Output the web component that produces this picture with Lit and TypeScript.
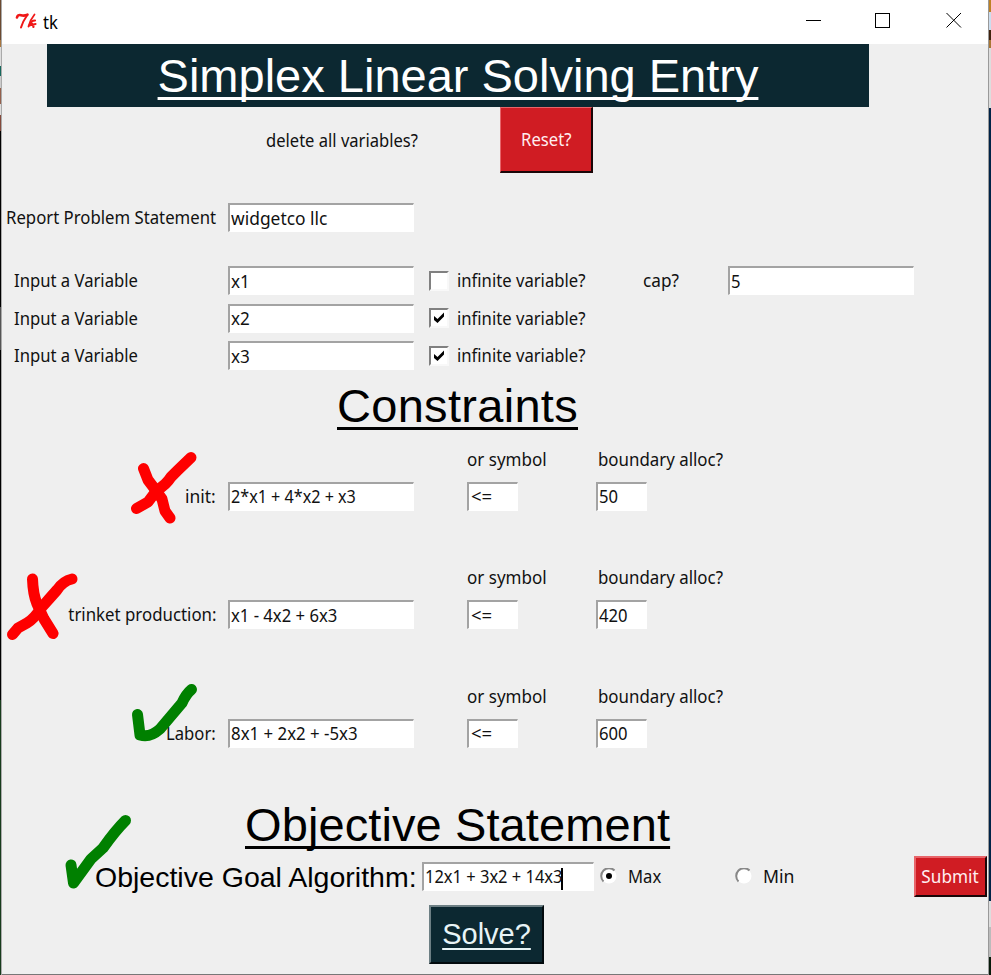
import { LitElement, html, css, svg, nothing } from "lit";
import { customElement } from "lit/decorators.js";
import { styleMap } from "lit/directives/style-map.js";

interface Variable {
  name: string;
  infinite: boolean;
  cap?: string;
}

interface Constraint {
  label: string;
  labelStretch?: number;
  expr: string;
  exprStretch?: number;
  symbol: string;
  bound: string;
  passed: boolean;
  strokes: string[];
}

const VARIABLES: Variable[] = [
  { name: "x1", infinite: false, cap: "5" },
  { name: "x2", infinite: true },
  { name: "x3", infinite: true },
];

const CONSTRAINTS: Constraint[] = [
  {
    label: "init:", labelStretch: 0.97, expr: "2*x1 + 4*x2 + x3", exprStretch: 0.897,
    symbol: "<=", bound: "50", passed: false,
    strokes: [
      "M191 457.500L178 470L171 477Q166 485 157 490L148 502L136.500 508.500",
      "M143.500 468.500L148 480Q155 489 162 499L165 511L170 518",
    ],
  },
  {
    label: "trinket production:", labelStretch: 0.935, expr: "x1 - 4x2 + 6x3",
    symbol: "<=", bound: "420", passed: false,
    strokes: [
      "M72 579Q63 581 57 590Q49 599 42 607Q34 619 27 623L18 628L12.500 634.500",
      "M32.500 579Q33 594 37 604L44 619L53 633.500",
    ],
  },
  {
    label: "Labor:", expr: "8x1 + 2x2 + -5x3", exprStretch: 0.935,
    symbol: "<=", bound: "600", passed: true,
    strokes: ["M137.500 714.500L140 735Q150 738 160 729L182 703Q186 694 191.500 689.500"],
  },
];

@customElement("app-root")
export class AppRoot extends LitElement {
  static styles = css`
    :host {
      display: grid;
      grid-template-columns: 2px 986px 3px;
      width: 991px;
      height: 975px;
      overflow: hidden;
      position: relative;
      font: 18px/24px "Noto Sans", "Open Sans", sans-serif;
      color: #111;
      background: #efefef;
    }
    .edge-l {
      border-right: 1px solid #aaa;
      background: linear-gradient(#6b4a30 0 40px, #a8763f 40px 47px, #ddd 47px 66px, #16685c 66px 76px, #ccc 76px 88px, #94604c 88px 104px, #ddd 104px 115px, #844a3c 115px 131px, #000 131px 307px, #555 307px 350px, #000 350px 700px, #173b1c 700px);
    }
    .edge-r {
      border-left: 1px solid #999;
      background: linear-gradient(#bd8125 0 12px, #cde 12px 30px, #40230e 30px 40px, #a87635 40px 48px, #ddd 48px 108px, #002347 108px 901px, #ddd 901px 927px, #bbb 927px 957px, #071a0a 957px);
    }
    .window { display: flex; flex-direction: column; border-bottom: 1px solid #777; }
    .titlebar {
      height: 44px;
      flex: none;
      background: #fff;
      display: flex;
      align-items: center;
      padding: 0 2px 0 13px;
      box-sizing: border-box;
    }
    .title { margin-left: 6px; font-size: 17.500px; color: #000; }
    .controls { margin-left: auto; display: flex; }
    svg { display: block; }
    .s { display: inline-block; transform: scaleX(0.925); transform-origin: 0 50%; white-space: pre; }
    .r .s { transform-origin: 100% 50%; }
    .c .s { transform-origin: 50% 50%; }
    .banner {
      width: 822px;
      height: 63px;
      margin-left: 45px;
      background: #0c2831;
      color: #fff;
      display: flex;
      justify-content: center;
    }
    .big {
      font: 47px/63px "Liberation Sans", Arial, sans-serif;
      text-decoration: underline;
      text-decoration-thickness: 3px;
      text-underline-offset: 5px;
      text-decoration-skip-ink: none;
      white-space: nowrap;
    }
    .heading .big { color: #000; letter-spacing: 0.1px; }
    .heading.h-con .big { letter-spacing: 0.300px; }
    .resetrow { display: flex; height: 66px; align-items: center; padding-left: 264px; }
    .resetrow .lbl { width: 234px; }
    .btn {
      box-sizing: border-box;
      background: #d01c23;
      color: #ffeef0;
      border: 2px solid;
      border-color: #e8656a #1a0608 #1a0608 #e8656a;
      display: flex;
      align-items: center;
      justify-content: center;
      padding: 0 0 1px;
      font: inherit;
    }
    .reset { width: 93px; height: 66px; border-top-width: 1px; border-left-width: 1px; }
    .row {
      display: grid;
      grid-template-columns: 214px 12px 201px 202px 97px 186px;
      align-items: center;
      height: 29px;
    }
    .row .s { position: relative; top: -0.500px; }
    .r { text-align: right; }
    .field {
      box-sizing: border-box;
      width: 186px;
      height: 29px;
      background: #fff;
      border: solid #fff;
      border-top-color: #a3a3a3;
      border-left-color: #a3a3a3;
      border-width: 2px 1px 1px 2px;
      padding-left: 1px;
      line-height: 26px;
      white-space: nowrap;
    }
    .report { margin-top: 30px; }
    .vars { display: grid; gap: 8.500px; margin-top: 34px; }
    .report .name { padding-left: 4px; }
    .vars .name { padding-left: 12px; }
    .cap { padding-left: 12px; }
    .check { display: flex; align-items: center; }
    .box {
      width: 16px;
      height: 16px;
      background: #fff;
      border: 2px solid;
      border-color: #808080 #f8f8f8 #f8f8f8 #808080;
      margin-right: 8px;
    }
    .heading { display: flex; height: 63px; }
    .h-con { margin: 4px 0 0 335px; height: 73px; }
    .con { height: 118.500px; }
    .con .row { grid-template-columns: 214px 12px 239px 129px 1fr; }
    .con .hints { height: 24px; }
    .con .main { margin-top: 10.500px; }
    .small { width: 51px; }
    .sym { padding-left: 2px; }
    .hint-b { padding-left: 2px; }
    .h-obj { margin: -10px 0 0 243px; }
    .goal {
      display: grid;
      grid-template-columns: 93px 327px 178px 135px 179px 73px;
      height: 42px;
      align-items: center;
    }
    .goal-label { font: 28.500px/36px "Liberation Sans", Arial, sans-serif; white-space: nowrap; color: #000; }
    .goal .field { width: 172px; }
    .caret { display: inline-block; width: 2px; height: 22px; background: #000; vertical-align: middle; margin-left: -14px; }
    .radio { display: flex; align-items: center; gap: 10px; }
    .radio .s, .goal .field .s { position: relative; top: -1px; }
    .submit { width: 73px; height: 41px; align-self: start; }
    .solve {
      margin: 7px 0 0 427px;
      width: 115px;
      height: 59px;
      background: #0c2831;
      border-color: #6d7f84 #020a0d #020a0d #6d7f84;
      font: 29px/40px "Liberation Sans", Arial, sans-serif;
      text-decoration: underline;
      text-decoration-thickness: 2px;
      text-underline-offset: 4px;
      color: #e8f4f6;
    }
    .marks { position: absolute; inset: 0; pointer-events: none; }
    .marks path { fill: none; stroke-width: 11; stroke-linecap: round; stroke-linejoin: round; }
    .bad { stroke: #fe0000; }
    .good { stroke: #008000; }
  `;

  // Narrows or widens a run of interface text horizontally.
  private text(value: string, stretch = 0.925) {
    return html`<span class="s" style=${styleMap({ transform: `scaleX(${stretch})` })}>${value}</span>`;
  }

  private variable(v: Variable) {
    return html`<div class="row">
      <div class="name">${this.text("Input a Variable")}</div><div></div>
      <div class="field">${this.text(v.name, 0.95)}</div>
      <div class="check">
        <div class="box">
          ${v.infinite
            ? html`<svg width="16" height="16"><path d="M3 6V10L6.500 13L13 6.500V2.500L6.500 9Z" fill="#000" /></svg>`
            : nothing}
        </div>
        ${this.text("infinite variable?")}
      </div>
      ${v.cap === undefined
        ? nothing
        : html`<div class="cap">${this.text("cap?", 0.955)}</div><div class="field">${this.text(v.cap)}</div>`}
    </div>`;
  }

  private constraint(c: Constraint) {
    return html`<div class="con">
      <div class="row hints">
        <div></div><div></div><div></div>
        <div>${this.text("or symbol", 0.945)}</div>
        <div class="hint-b">${this.text("boundary alloc?", 0.937)}</div>
      </div>
      <div class="row main">
        <div class="r">${this.text(c.label, c.labelStretch)}</div><div></div>
        <div class="field">${this.text(c.expr, c.exprStretch)}</div>
        <div class="field small sym">${this.text(c.symbol, 1.03)}</div>
        <div class="field small">${this.text(c.bound)}</div>
      </div>
    </div>`;
  }

  private radio(label: string, on: boolean, stretch: number) {
    return html`<div class="radio">
      <svg width="18" height="18" viewBox="0 0 18 18">
        <circle cx="9" cy="8" r="7.500" fill="#fff" />
        <path d="M3.500 13.500A7.500 7.500 0 0 1 14.500 2.500" fill="none" stroke="#888" stroke-width="2" />
        ${on ? svg`<circle cx="9" cy="8" r="3" fill="#000" />` : nothing}
      </svg>
      ${this.text(label, stretch)}
    </div>`;
  }

  render() {
    return html`
      <div class="edge-l"></div>
      <div class="window">
        <div class="titlebar">
          <svg width="22" height="18" viewBox="0 0 22 18" fill="none" stroke="#f01818" stroke-linecap="round">
            <path d="M2 4.500Q2.500 1.500 6 2.200Q9 3.200 12.500 1.700" stroke-width="2.600" />
            <path d="M12 2.500Q8 8 6 14.500" stroke-width="2" />
            <path d="M19.500 1.500Q15 7 13.500 13.500" stroke-width="1.800" />
            <path d="M20 7.500Q16 7.500 15.500 10.500Q18 10 18.500 14M14 12.500L20.500 11" stroke-width="2.200" />
          </svg>
          <span class="title">${this.text("tk", 0.95)}</span>
          <svg class="controls" width="180" height="44" fill="none" stroke="#000">
            <path d="M0 20.500H15" />
            <rect x="69.500" y="13.500" width="14" height="14" />
            <path d="M140.500 13L155 27.500M155 13L140.500 27.500" />
          </svg>
        </div>
        <div class="banner"><span class="big">Simplex Linear Solving Entry</span></div>
        <div class="resetrow">
          <div class="lbl">${this.text("delete all variables?", 0.92)}</div>
          <button class="btn reset c">${this.text("Reset?")}</button>
        </div>
        <div class="row report">
          <div class="name">${this.text("Report Problem Statement", 0.93)}</div><div></div>
          <div class="field">${this.text("widgetco llc", 0.967)}</div>
        </div>
        <div class="vars">${VARIABLES.map((v) => this.variable(v))}</div>
        <div class="heading h-con"><span class="big">Constraints</span></div>
        ${CONSTRAINTS.map((c) => this.constraint(c))}
        <div class="heading h-obj"><span class="big">Objective Statement</span></div>
        <div class="goal">
          <div></div>
          <div class="goal-label">Objective Goal Algorithm:</div>
          <div class="field">${this.text("12x1 + 3x2 + 14x3", 0.915)}<span class="caret"></span></div>
          ${this.radio("Max", true, 0.925)} ${this.radio("Min", false, 0.98)}
          <button class="btn submit c">${this.text("Submit", 0.955)}</button>
        </div>
        <button class="btn solve">Solve?</button>
      </div>
      <div class="edge-r"></div>
      <svg class="marks" width="991" height="975">
        ${CONSTRAINTS.map((c) => c.strokes.map((d) => svg`<path class=${c.passed ? "good" : "bad"} d=${d} />`))}
        <path class="good" d="M71 865L73.500 883L91 859L103 848Q115 831 125.500 820.500" />
      </svg>
    `;
  }
}
